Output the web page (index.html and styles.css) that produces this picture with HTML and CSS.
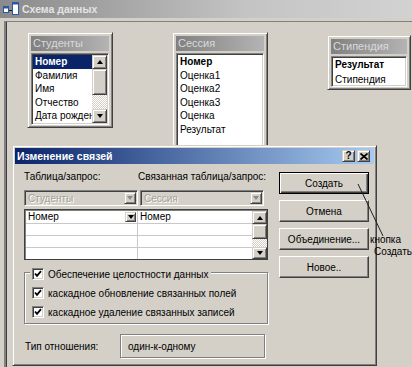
FILE: index.html
```html
<!DOCTYPE html>
<html lang="ru">
<head>
  <meta charset="UTF-8" />
  <meta name="viewport" content="width=device-width, initial-scale=1.0" />
  <title>Схема данных</title>
  <link rel="stylesheet" href="styles.css">
</head>
<body>
  <div class="window">
    <div class="win-title">
      <svg class="win-icon" viewBox="0 0 16 14" width="16" height="14">
        <rect x="0.5" y="4.5" width="5" height="6" fill="#fff" stroke="#2a58a8" />
        <rect x="0.5" y="4.5" width="5" height="2" fill="#2a58a8" />
        <rect x="9.5" y="0.5" width="6" height="12" fill="#fff" stroke="#2a58a8" />
        <rect x="9.5" y="0.5" width="6" height="2" fill="#2a58a8" />
        <line x1="6" y1="8.5" x2="9" y2="8.5" stroke="#1a1a1a" />
      </svg>
      <span>Схема данных</span>
    </div>
    <div class="canvas">
      <div class="tbl tbl-students">
        <div class="tbl-head">Студенты</div>
        <div class="tbl-list">
          <ul class="fields">
            <li class="key sel">Номер</li>
            <li>Фамилия</li>
            <li>Имя</li>
            <li>Отчество</li>
            <li>Дата рождения</li>
          </ul>
          <div class="vscroll">
            <div class="sb-btn sb-up"></div>
            <div class="sb-thumb"></div>
            <div class="sb-track"></div>
            <div class="sb-btn sb-down"></div>
          </div>
        </div>
      </div>

      <div class="tbl tbl-session">
        <div class="tbl-head">Сессия</div>
        <div class="tbl-list">
          <ul class="fields">
            <li class="key">Номер</li>
            <li>Оценка1</li>
            <li>Оценка2</li>
            <li>Оценка3</li>
            <li>Оценка</li>
            <li>Результат</li>
            <li></li>
            <li></li>
          </ul>
        </div>
      </div>

      <div class="tbl tbl-grant">
        <div class="tbl-head">Стипендия</div>
        <div class="tbl-list">
          <ul class="fields wide">
            <li class="key">Результат</li>
            <li>Стипендия</li>
          </ul>
        </div>
      </div>
    </div>
  </div>

  <div class="dialog">
    <div class="dlg-title">
      <span>Изменение связей</span>
      <div class="cap-btns">
        <span class="cap-btn">?</span>
        <span class="cap-btn">
          <svg viewBox="0 0 8 7" width="8" height="7"><path d="M0.5 0.5 L7.5 6.5 M7.5 0.5 L0.5 6.5" stroke="#000" stroke-width="1.7" /></svg>
        </span>
      </div>
    </div>
    <div class="dlg-body">
      <div class="dlg-main">
        <div class="labels">
          <span class="lbl-left">Таблица/запрос:</span>
          <span>Связанная таблица/запрос:</span>
        </div>
        <div class="combos">
          <div class="combo combo-left"><span>Студенты</span><i class="drop off"></i></div>
          <div class="combo combo-right"><span>Сессия</span><i class="drop off"></i></div>
        </div>
        <div class="grid">
          <div class="grid-rows">
            <div class="grow first">
              <div class="gcell c1"><span>Номер</span><i class="drop mini"></i></div>
              <div class="gcell">Номер</div>
            </div>
            <div class="grow"><div class="gcell c1"></div><div class="gcell"></div></div>
            <div class="grow"><div class="gcell c1"></div><div class="gcell"></div></div>
            <div class="grow last"><div class="gcell c1"></div><div class="gcell"></div></div>
          </div>
          <div class="vscroll grid-scroll">
            <div class="sb-btn sb-up"></div>
            <div class="sb-thumb"></div>
            <div class="sb-track"></div>
            <div class="sb-btn sb-down"></div>
          </div>
        </div>
        <div class="group">
          <div class="chk legend"><span class="box"><svg viewBox="0 0 8 8" width="8" height="8"><path d="M1 3.5 L3 5.8 L7 1.2" fill="none" stroke="#000" stroke-width="1.8" /></svg></span>Обеспечение целостности данных</div>
          <div class="chk"><span class="box"><svg viewBox="0 0 8 8" width="8" height="8"><path d="M1 3.5 L3 5.8 L7 1.2" fill="none" stroke="#000" stroke-width="1.8" /></svg></span>каскадное обновление связанных полей</div>
          <div class="chk"><span class="box"><svg viewBox="0 0 8 8" width="8" height="8"><path d="M1 3.5 L3 5.8 L7 1.2" fill="none" stroke="#000" stroke-width="1.8" /></svg></span>каскадное удаление связанных записей</div>
        </div>
        <div class="rel-type">
          <span class="rel-label">Тип отношения:</span>
          <div class="rel-value">один-к-одному</div>
        </div>
      </div>
      <div class="dlg-buttons">
        <button class="btn btn-default">Создать</button>
        <button class="btn">Отмена</button>
        <button class="btn">Объединение...</button>
        <button class="btn">Новое..</button>
      </div>
    </div>
  </div>

  <svg class="annot-line" width="412" height="367" viewBox="0 0 412 367">
    <line x1="358" y1="184" x2="383" y2="236" stroke="#202020" stroke-width="1" />
  </svg>
  <div class="annot">кнопка<br><span>Создать</span></div>
</body>
</html>
```

FILE: styles.css
```css
* { box-sizing: border-box; }
body {
  margin: 0;
  width: 412px; height: 367px;
  overflow: hidden; position: relative;
  background: #d4d0c8; color: #000;
  font-family: "Liberation Sans", Arial, sans-serif;
  font-size: 10px;
}

/* outer window */
.window { height: 100%; display: flex; flex-direction: column; }
.win-title {
  height: 18px; flex: none;
  display: flex; align-items: center; gap: 3px;
  padding-left: 3px;
  background: linear-gradient(90deg, #8a8a8a, #c4c4c4 60%, #d2d2d2);
  color: #e4e4e4; font-weight: bold; font-size: 10.5px;
}
.win-icon { flex: none; }
.canvas {
  flex: 1; position: relative;
  margin: 3px 0 0 4px;
  border-top: 1px solid #808080; border-left: 2px solid #808080;
  box-shadow: inset 1px 0 #404040;
}

/* schema tables */
.tbl {
  position: absolute;
  display: flex; flex-direction: column; gap: 2px;
  padding: 3px 3px 2px;
  background: #d4d0c8;
  border: 1px solid; border-color: #d4d0c8 #404040 #404040 #d4d0c8;
  box-shadow: inset 1px 1px #fff, inset -1px -1px #808080;
}
.tbl-students { left: 21px; top: 10px; width: 86px; height: 96px; }
.tbl-session { left: 166px; top: 10px; width: 96px; height: 150px; }
.tbl-grant { left: 321px; top: 13px; width: 84px; height: 55px; }
.tbl-head {
  height: 15px; flex: none;
  padding-left: 2px; line-height: 15px;
  font-size: 11px; color: #dadada;
  background: linear-gradient(90deg, #808080, #b4b4b4);
  white-space: nowrap; overflow: hidden;
}
.tbl-list {
  flex: 1; min-height: 0;
  display: flex; padding: 1px;
  background: #fff;
  border: 1px solid; border-color: #808080 #fff #fff #808080;
  box-shadow: inset 1px 1px #404040, inset -1px -1px #d4d0c8;
  overflow: hidden;
}
.fields { flex: 1; min-width: 0; margin: 0; padding: 0; list-style: none; }
.fields li {
  height: 13.5px; line-height: 13.5px;
  padding-left: 2px;
  white-space: nowrap; overflow: hidden;
}
.fields.wide li { height: 14.5px; line-height: 14.5px; }
.fields .key { font-weight: bold; }
.fields .sel { background: #0a246a; color: #fff; }

/* scrollbars */
.vscroll { width: 15px; flex: none; display: flex; flex-direction: column; }
.sb-btn, .sb-thumb, .drop, .cap-btn {
  background: #d4d0c8;
  border: 1px solid; border-color: #d4d0c8 #404040 #404040 #d4d0c8;
  box-shadow: inset 1px 1px #fff, inset -1px -1px #808080;
}
.sb-btn { height: 14px; flex: none; display: flex; align-items: center; justify-content: center; }
.sb-btn::after, .drop::after {
  content: ""; width: 0; height: 0;
  border-left: 3.5px solid transparent; border-right: 3.5px solid transparent;
}
.sb-up::after { border-bottom: 4px solid #000; }
.sb-down::after { border-top: 4px solid #000; }
.sb-thumb { height: 26px; flex: none; }
.sb-track {
  flex: 1;
  background: repeating-conic-gradient(#fff 0 25%, #d4d0c8 0 50%) 0 0 / 2px 2px;
}

/* dialog */
.dialog {
  position: absolute; left: 12px; top: 145px;
  width: 365px; height: 221px;
  display: flex; flex-direction: column;
  padding: 2px;
  background: #d4d0c8;
  border: 1px solid; border-color: #d4d0c8 #404040 #404040 #d4d0c8;
  box-shadow: inset 1px 1px #fff, inset -1px -1px #808080;
}
.dlg-title {
  height: 16px; flex: none;
  display: flex; align-items: center; justify-content: space-between;
  padding: 0 4px 0 2px;
  background: linear-gradient(90deg, #0a246a, #a6caf0);
  color: #fff; font-weight: bold; font-size: 10.5px;
}
.cap-btns { display: flex; gap: 2px; }
.cap-btn {
  width: 13px; height: 12px;
  display: flex; align-items: center; justify-content: center;
  color: #000; font-size: 10px; font-weight: bold; line-height: 1;
}
.dlg-body { flex: 1; display: flex; gap: 11px; padding: 6px 5px 0 9px; }
.dlg-main { width: 244px; flex: none; display: flex; flex-direction: column; }
.labels { display: flex; height: 13px; line-height: 13px; }
.lbl-left { width: 114px; flex: none; }

.combos { display: flex; gap: 2px; margin-top: 7px; height: 16px; }
.combo {
  display: flex; align-items: center;
  padding: 1px 1px 1px 3px;
  border: 1px solid; border-color: #808080 #fff #fff #808080;
  box-shadow: inset 1px 1px #404040, inset -1px -1px #d4d0c8;
  color: #a5a198; text-shadow: 1px 1px #fff;
}
.combo span { flex: 1; }
.combo-left { width: 114px; }
.combo-right { width: 124px; }
.drop {
  width: 12px; height: 12px; flex: none;
  display: flex; align-items: center; justify-content: center;
}
.drop::after { border-top: 4px solid #000; }
.drop.off::after { border-top-color: #8a8a8a; }
.drop.mini { width: 11px; height: 10px; }

.grid {
  margin-top: 3px; height: 51px;
  display: flex; background: #fff;
  border: 1px solid #404040;
  box-shadow: inset 1px 1px #808080;
  padding: 1px 0 0 1px;
}
.grid-rows { flex: 1; display: flex; flex-direction: column; }
.grow { display: flex; height: 12px; flex: none; border-bottom: 1px solid #c8c8c8; }
.grow.first { height: 13px; }
.grow.last { flex: 1; border-bottom: 0; }
.gcell { flex: 1; display: flex; align-items: center; padding-left: 2px; line-height: 12px; }
.gcell.c1 { width: 112px; flex: none; border-right: 1px solid #c8c8c8; padding-right: 1px; }
.gcell.c1 span { flex: 1; }
.grid-scroll .sb-btn { height: 13px; }
.grid-scroll .sb-down { height: 12px; }
.grid-scroll .sb-thumb { height: 15px; }

.group {
  margin-top: 12px; height: 52px;
  display: flex; flex-direction: column; gap: 7px;
  border: 1px solid #808080;
  box-shadow: inset 1px 1px #fff, 1px 1px #fff;
}
.chk { display: flex; align-items: center; gap: 4px; height: 12px; padding-left: 7px; white-space: nowrap; }
.chk.legend {
  margin-top: -5px; margin-left: 5px;
  padding: 0 3px 0 2px;
  width: fit-content; background: #d4d0c8;
}
.box {
  width: 12px; height: 12px; flex: none;
  display: flex; align-items: center; justify-content: center;
  background: #fff;
  border: 1px solid; border-color: #808080 #fff #fff #808080;
  box-shadow: inset 1px 1px #404040, inset -1px -1px #d4d0c8;
}

.rel-type { margin-top: 10px; height: 24px; display: flex; align-items: center; }
.rel-label { width: 96px; flex: none; padding-left: 1px; }
.rel-value {
  width: 145px; height: 24px;
  display: flex; align-items: center; padding-left: 7px;
  border: 1px solid #808080;
  box-shadow: inset 1px 1px #fff, 1px 1px #fff;
}

.dlg-buttons { width: 90px; flex: none; display: flex; flex-direction: column; gap: 6px; margin-top: 2px; }
.btn {
  height: 22px; padding: 0;
  font: inherit; color: #000;
  background: #d4d0c8;
  border: 1px solid; border-color: #fff #404040 #404040 #fff;
  box-shadow: inset -1px -1px #808080;
}
.btn-default {
  border-color: #000;
  box-shadow: inset 1px 1px #fff, inset -1px -1px #404040, inset -2px -2px #808080;
}

/* annotation */
.annot-line { position: absolute; left: 0; top: 0; pointer-events: none; }
.annot {
  position: absolute; left: 370px; top: 234px;
  font-size: 10px; line-height: 12px;
}
.annot span { padding-left: 4px; }
```
